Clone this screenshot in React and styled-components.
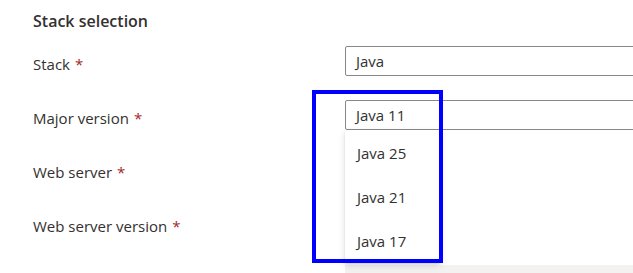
import React from "react";
import styled, { createGlobalStyle } from "styled-components";

const GlobalStyle = createGlobalStyle`
  html, body {
    margin: 0;
    padding: 0;
    background: #ffffff;
    overflow: hidden;
  }
  body {
    font-family: "Open Sans", "Noto Sans", "Liberation Sans", sans-serif;
    color: #323130;
  }
`;

const Page = styled.div`
  width: 633px;
  height: 273px;
  overflow: hidden;
  position: relative;
  padding: 9px 0 0 33px;
  box-sizing: border-box;
`;

const Heading = styled.h2`
  margin: 0 0 13px;
  font-size: 16px;
  font-weight: 600;
  line-height: 24px;
  color: #323130;
`;

const Form = styled.div`
  display: grid;
  grid-template-columns: 312px 400px;
  grid-auto-rows: 54px;
`;

const Label = styled.div`
  font-size: 15px;
  line-height: 20px;
  padding-top: 8px;
  color: #323130;
`;

const Required = styled.span`
  color: #a4262c;
  margin-left: 5px;
`;

const FieldCell = styled.div`
  position: relative;
`;

const Select = styled.div`
  height: 30px;
  box-sizing: border-box;
  border: 1px solid #8a8886;
  border-radius: 2px;
  padding: 0 10px;
  display: flex;
  align-items: center;
  font-size: 15px;
  color: #323130;
  background: #fff;
`;

const Menu = styled.ul`
  position: absolute;
  top: 30px;
  left: 0;
  width: 95px;
  margin: 0;
  padding: 1px 0 0;
  list-style: none;
  background: #fff;
  box-shadow: 0 3.2px 7.2px rgba(0, 0, 0, 0.13), 0 0.6px 1.8px rgba(0, 0, 0, 0.11);
  z-index: 2;
`;

const Option = styled.li`
  height: 44px;
  display: flex;
  align-items: center;
  padding: 0 12px;
  font-size: 15px;
  color: #323130;
`;

const DisabledBar = styled.div`
  grid-column: 2;
  height: 30px;
  margin-top: 3px;
  background: #f3f2f1;
`;

const Highlight = styled.div`
  position: absolute;
  left: 312px;
  top: 90px;
  width: 131px;
  height: 173px;
  box-sizing: border-box;
  border: 4px solid #0000ff;
  z-index: 3;
  pointer-events: none;
`;

const fields = [
  { label: "Stack", value: "Java" },
  { label: "Major version", value: "Java 11", open: true },
  { label: "Web server" },
  { label: "Web server version" },
];

const versions = ["Java 25", "Java 21", "Java 17"];

export default function App() {
  return (
    <>
      <GlobalStyle />
      <Page>
        <Heading>Stack selection</Heading>
        <Form>
          {fields.map((f) => (
            <React.Fragment key={f.label}>
              <Label>
                {f.label}
                <Required>*</Required>
              </Label>
              <FieldCell>
                {f.value && <Select>{f.value}</Select>}
                {f.open && (
                  <Menu>
                    {versions.map((v) => (
                      <Option key={v}>{v}</Option>
                    ))}
                  </Menu>
                )}
              </FieldCell>
            </React.Fragment>
          ))}
          <DisabledBar />
        </Form>
        <Highlight />
      </Page>
    </>
  );
}
